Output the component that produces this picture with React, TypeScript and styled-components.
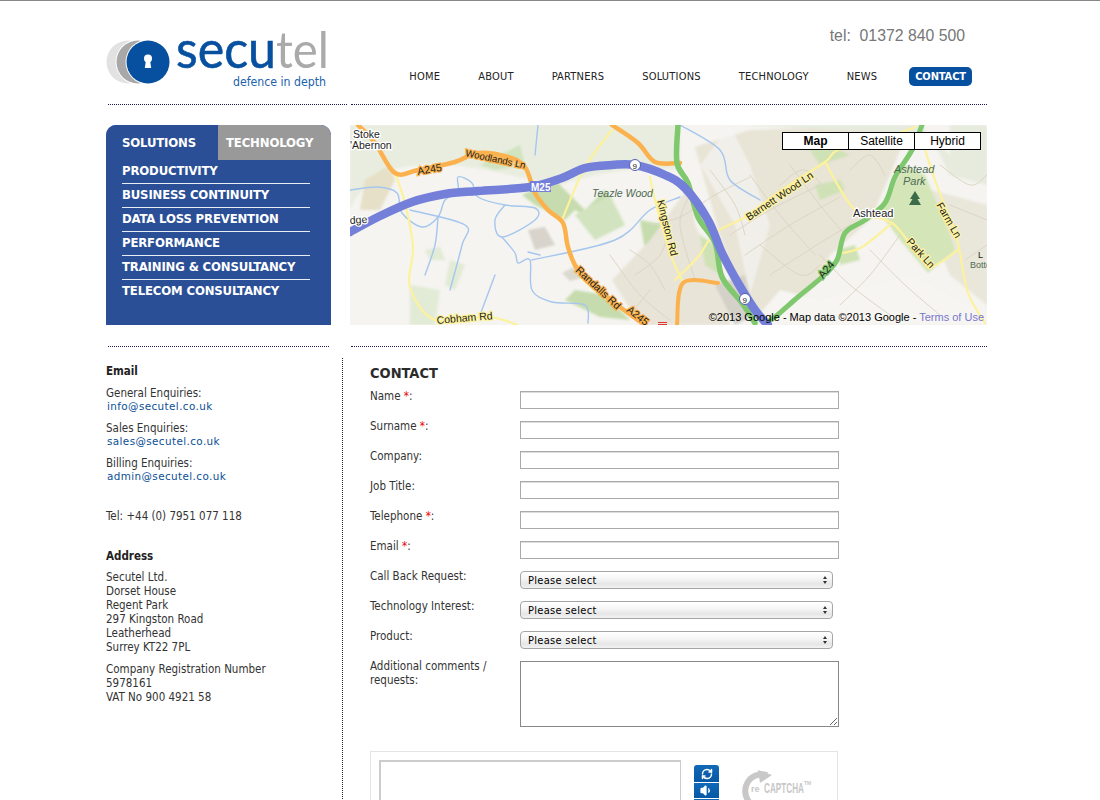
import React from "react";
import styled, { createGlobalStyle } from "styled-components";
import { RefreshCw, Volume1 } from "lucide-react";

const bodyFont = `"DejaVu Sans Condensed", "DejaVu Sans", "Noto Sans", sans-serif`;

const GlobalStyle = createGlobalStyle`
  html, body { margin: 0; padding: 0; background: #fff; }
  body { font-family: ${bodyFont}; font-stretch: condensed; color: #333; }
`;

const Shell = styled.div`
  height: 800px;
  overflow: hidden;
  border-top: 1px solid #888;
  box-sizing: border-box;
  display: flex;
  flex-direction: column;
`;

const Page = styled.div`
  width: 881px;
  margin-left: 106px;
  flex: 1;
  display: flex;
  flex-direction: column;
`;

const Header = styled.header`
  height: 103px;
  display: flex;
  justify-content: space-between;
`;

const LogoWrap = styled.a`
  display: block;
  padding-top: 28px;
`;

const HeaderRight = styled.div`
  display: flex;
  flex-direction: column;
  align-items: flex-end;
  padding-right: 15px;
`;

const Phone = styled.div`
  font: 15.8px/20px "Liberation Sans", Arial, sans-serif;
  color: #777;
  margin: 25px 7px 0 0;
  white-space: pre;
`;

const Nav = styled.nav`
  display: flex;
  align-items: center;
  gap: 38px;
  margin-top: 21px;
`;

const NavItem = styled.a<{ $active?: boolean }>`
  font-size: 11px;
  line-height: 19px;
  letter-spacing: ${(p) => (p.$active ? "-0.1px" : "0.2px")};
  color: ${(p) => (p.$active ? "#fff" : "#222")};
  font-weight: ${(p) => (p.$active ? 700 : 400)};
  background: ${(p) => (p.$active ? "#07509f" : "transparent")};
  border-radius: ${(p) => (p.$active ? "5px" : "0")};
  padding: ${(p) => (p.$active ? "0 6px" : "0")};
  margin-left: ${(p) => (p.$active ? "-6px" : "0")};
`;

const RuleRow = styled.div`
  display: flex;
  padding-left: 2px;
`;

const Rule = styled.div<{ $w: number; $gap?: number }>`
  width: ${(p) => p.$w}px;
  margin-right: ${(p) => p.$gap ?? 0}px;
  border-top: 1px dotted #1a1a55;
`;

const Panels = styled.div`
  display: flex;
  gap: 19px;
  margin: 20px 0 21px;
`;

const SideMenu = styled.div`
  width: 225px;
  height: 200px;
  background: #2a4f96;
  border-radius: 10px 10px 0 0;
  overflow: hidden;
`;

const Tabs = styled.div`
  display: flex;
  height: 35px;
`;

const Tab = styled.div<{ $on?: boolean }>`
  width: ${(p) => (p.$on ? 112 : 113)}px;
  background: ${(p) => (p.$on ? "#2a4f96" : "#999")};
  border-radius: 0 10px 0 0;
  color: #fff;
  font-size: 13px;
  letter-spacing: -0.15px;
  font-weight: 700;
  line-height: 36px;
  padding-left: ${(p) => (p.$on ? 16 : 8)}px;
  box-sizing: border-box;
  white-space: nowrap;
`;

const MenuList = styled.ul`
  list-style: none;
  margin: 0 21px 0 16px;
  padding: 0;
`;

const MenuItem = styled.li`
  height: 24px;
  box-sizing: border-box;
  color: #fff;
  font-size: 13px;
  letter-spacing: -0.15px;
  font-weight: 700;
  line-height: 22px;
  white-space: nowrap;
  border-bottom: 1px solid #e8edf6;
  &:last-child { border-bottom: 0; }
`;

const MapBox = styled.div`
  position: relative;
  width: 637px;
  height: 200px;
  overflow: hidden;
  background: #f3f1ec;
`;

const MapTypes = styled.div`
  position: absolute;
  top: 7px;
  right: 6px;
  display: flex;
  border: 1px solid #000;
  background: #000;
  gap: 1px;
`;

const MapType = styled.div<{ $on?: boolean }>`
  width: 65px;
  height: 16px;
  background: #fff;
  font: ${(p) => (p.$on ? 700 : 400)} 12px/16px "Liberation Sans", Arial, sans-serif;
  color: #000;
  text-align: center;
`;

const Copyright = styled.div`
  position: absolute;
  right: 3px;
  bottom: 1px;
  font: 11px/14px "Liberation Sans", Arial, sans-serif;
  color: #000;
  white-space: nowrap;
  a { color: #7777cc; }
`;

const Main = styled.div`
  flex: 1;
  display: flex;
  margin-top: 11px;
`;

const Sidebar = styled.aside`
  width: 236px;
  border-right: 1px dotted #222;
  padding-top: 6px;
  font-size: 11.5px;
  line-height: 14px;
  flex: none;
`;

const SideTitle = styled.div<{ $mb?: number }>`
  font-weight: 700;
  margin-bottom: ${(p) => p.$mb ?? 8}px;
  color: #222;
`;

const SideBlock = styled.div<{ $mb?: number }>`
  margin-bottom: ${(p) => p.$mb ?? 8}px;
`;

const MailLink = styled.a`
  display: block;
  margin-left: 1px;
  line-height: 13px;
  color: #0a4f96;
  font-family: "DejaVu Sans", sans-serif;
  font-stretch: normal;
  font-size: 10.4px;
  letter-spacing: 0.4px;
`;

const Content = styled.main`
  flex: 1;
  padding-left: 27px;
`;

const Heading = styled.h1`
  margin: 0;
  height: 31px;
  font-size: 14.500px;
  line-height: 31px;
  font-weight: 700;
  color: #2b2b2b;
`;

const Row = styled.div`
  display: flex;
  min-height: 30px;
`;

const FieldLabel = styled.label`
  width: 150px;
  flex: none;
  font-size: 11.5px;
  line-height: 14px;
  color: #333;
  b { color: #e00; font-weight: 400; }
`;

const TextInput = styled.input`
  width: 319px;
  height: 18px;
  margin: 2px 0 0;
  box-sizing: border-box;
  padding: 0 2px;
  border: 1px solid #aaa;
  box-shadow: inset 0 1px 0 #ddd;
  background: #fff;
  outline: 0;
`;

const SelectWrap = styled.div`
  position: relative;
  margin-top: 2px;
  width: 313px;
  height: 18px;
`;

const Select = styled.select`
  display: block;
  appearance: none;
  width: 100%;
  height: 100%;
  box-sizing: border-box;
  border: 1px solid #a5a5a5;
  border-radius: 4px;
  padding: 0 0 0 7px;
  font-family: ${bodyFont};
  font-size: 11px;
  letter-spacing: 0.3px;
  color: #000;
  background: linear-gradient(#fff 0%, #f6f6f6 40%, #e6e6e6 75%, #f2f2f2 100%);
  outline: 0;
`;

const SelectArrows = styled.svg`
  position: absolute;
  right: 5px;
  top: 4px;
  pointer-events: none;
`;

const Comments = styled.textarea`
  width: 319px;
  height: 66px;
  margin: 2px 0 0;
  box-sizing: border-box;
  border: 1px solid #888;
  padding: 2px;
  outline: 0;
`;

const CaptchaBox = styled.div`
  display: flex;
  width: 468px;
  height: 130px;
  margin-top: 24px;
  padding: 8px;
  box-sizing: border-box;
  border: 1px solid #e4e4e4;
`;

const CaptchaImage = styled.div`
  width: 302px;
  height: 60px;
  box-sizing: border-box;
  border: 2px solid #ccc;
  border-right-width: 1px;
  flex: none;
`;

const CaptchaButtons = styled.div`
  display: flex;
  flex-direction: column;
  gap: 1px;
  width: 25px;
  margin: 5px 0 0 13px;
  flex: none;
`;

const CaptchaButton = styled.div<{ $first?: boolean }>`
  height: ${(p) => (p.$first ? 17 : 15)}px;
  display: flex;
  align-items: center;
  justify-content: center;
  color: #fff;
  background: linear-gradient(#1069b8, #0558a5);
  border-radius: ${(p) => (p.$first ? "3px 3px 0 0" : "0")};
`;

const CaptchaLogo = styled.svg`
  margin: 10px 0 0 21px;
  flex: none;
`;

const Road = styled.path<{ $c: string; $w: number }>`
  fill: none;
  stroke: ${(p) => p.$c};
  stroke-width: ${(p) => p.$w};
  stroke-linecap: round;
  stroke-linejoin: round;
`;

const SoftGround = styled.g`
  filter: blur(1.2px);
`;

const MapLabel = styled.text<{ $halo?: string }>`
  font: 10.5px "Liberation Sans", Arial, sans-serif;
  fill: #222;
  stroke: ${(p) => p.$halo ?? "transparent"};
  stroke-width: 2.5px;
  paint-order: stroke;
`;

const WoodLabel = styled(MapLabel)`
  font-style: italic;
  fill: #4d6b55;
`;

// catmull-rom through the points, roads looked too angular as straight lines
const smooth = (pts: string) => {
  const p = pts.split(" ").map((s) => s.split(",").map(Number));
  let d = `M${p[0][0]} ${p[0][1]}`;
  for (let i = 0; i < p.length - 1; i++) {
    const a = p[i - 1] ?? p[i];
    const b = p[i];
    const c = p[i + 1];
    const e = p[i + 2] ?? c;
    d += `C${b[0] + (c[0] - a[0]) / 6} ${b[1] + (c[1] - a[1]) / 6} ${c[0] - (e[0] - b[0]) / 6} ${c[1] - (e[1] - b[1]) / 6} ${c[0]} ${c[1]}`;
  }
  return d;
};

const Logo = () => (
  <svg width="224" height="60" viewBox="0 0 224 60">
    <circle cx="22" cy="33" r="21.5" fill="#e2e2e2" />
    <circle cx="32" cy="33" r="22.5" fill="#fff" />
    <circle cx="32" cy="33" r="21.5" fill="#a8a8a8" />
    <circle cx="42" cy="33" r="22.5" fill="#fff" />
    <circle cx="42" cy="33" r="21.5" fill="#07509f" />
    <circle cx="42" cy="29.5" r="4" fill="#fff" />
    <path d="M40 31h4l1.2 8h-6.4z" fill="#fff" />
    <text x="70" y="39" fontFamily="Lato, sans-serif" fontSize="53" fill="#07509f" textLength="100" lengthAdjust="spacingAndGlyphs" stroke="#07509f" strokeWidth="0.6">secu</text>
    <text x="170" y="39" fontFamily="Lato, sans-serif" fontSize="51" fill="#aaa" textLength="53" lengthAdjust="spacingAndGlyphs">tel</text>
    <text x="127" y="57" fontFamily="DejaVu Sans Condensed, sans-serif" fontSize="12" fill="#1c62ab" textLength="93" lengthAdjust="spacingAndGlyphs">defence in depth</text>
  </svg>
);

const minorStreets = [
  "300,100 330,92 365,70 400,52",
  "380,110 420,85 470,60",
  "395,130 440,100 490,72",
  "420,150 470,118 500,100",
  "400,50 430,90 465,130",
  "440,40 470,80 495,110",
  "470,130 500,160 540,190",
  "520,125 555,160 590,190",
  "550,110 520,150 490,180",
  "285,150 310,130 320,100",
  "260,130 290,170 320,195",
  "300,165 280,190",
  "590,40 620,60 637,50",
  "600,80 637,95",
  "615,135 637,120",
  "410,120 450,150 470,140",
  "430,60 455,45 480,70",
  "360,45 385,80 395,110",
  "500,45 520,30 535,50",
  "280,125 300,140 315,165",
  "345,155 330,100 340,70",
];

const rivers = [
  "0,65 28,62 47,68 52,88 72,102 88,92 95,75 108,67 108,52 122,58 128,72 155,80 185,83 185,95 152,112 145,95 155,80",
  "152,112 165,128 168,138 180,135 182,165 202,177 235,180 238,198",
  "182,135 265,115 300,85 330,72",
  "60,85 115,100 112,120 100,165",
  "88,92 85,120 75,150",
  "145,150 130,190",
  "178,127 190,130",
  "188,0 185,30",
  "330,0 370,25 380,55 410,75",
  "0,110 8,100",
];

const MapImage = () => (
  <svg width="637" height="200" viewBox="0 0 637 200">
    <rect width="637" height="200" fill="#f5f4f0" />
    <SoftGround>
      <path d="M0 0H330V45C280 40 240 50 210 60 150 50 100 30 40 45 20 55 5 70 0 85Z" fill="#e8eddf" />
      <path d="M15 55 40 40 45 55 30 85 10 85Z" fill="#e6e0c8" />
      <path d="M172 70 205 55 235 85 255 65 270 90 250 100 225 85 215 95 185 80Z" fill="#c6dcae" />
      <path d="M130 40 170 20 175 40 145 45Z" fill="#d2e3bf" />
      <path d="M225 90 260 70 275 100 245 115Z" fill="#d2e3bf" />
      <path d="M290 95 315 100 318 125 295 125Z" fill="#c6dcae" />
      <path d="M225 165 255 170 280 195 250 192 215 175Z" fill="#c6dcae" />
      <path d="M60 160 90 165 85 200 60 200Z" fill="#e2ebd6" />
      <path d="M100 135 115 140 105 165 95 160Z" fill="#e2ebd6" />
      <path d="M75 125 90 122 95 135 80 135Z" fill="#e2ebd6" />
      <path d="M178 105 195 102 205 120 185 125Z" fill="#d8d4cc" />
      <path d="M212 148 228 140 235 152 220 156Z" fill="#dcd9ce" />
      <path d="M262 155 300 115 340 60 345 100 375 160 380 200 290 200Z" fill="#e8e4d8" />
      <path d="M345 22 400 5 560 0 540 50 520 95 480 130 465 160 425 200 395 180 370 110Z" fill="#e8e4d6" />
      <path d="M562 60 637 80 637 180 600 150Z" fill="#e9e6da" />
      <path d="M395 0H570L600 30V0H637V60L600 50 580 10Z" fill="#e6ebde" />
      <path d="M528 85 555 40 575 50 600 110 605 125 578 148 550 115Z" fill="#d4e5b8" />
      <path d="M445 10 478 20 500 30 470 40 460 25Z" fill="#cfe2b6" />
      <path d="M487 125 505 120 510 135 490 140Z" fill="#cfe2b6" />
      <path d="M465 60 490 55 495 65 470 75Z" fill="#cfe2b6" />
      <path d="M350 110 365 120 370 150 355 140Z" fill="#cfe2b6" />
      <path d="M400 200 430 165 470 175 560 150 637 190V200Z" fill="#f6f5f2" />
      <path d="M380 0 400 40 420 100 400 170 385 100 350 40Z" fill="#f6f5f2" opacity="0.65" />
      <path d="M365 160 395 150 405 190 385 200Z" fill="#d4d1c9" />
    </SoftGround>
    {minorStreets.map((s) => (
      <Road key={s} d={smooth(s)} $c="#dcd6c6" $w={1} />
    ))}
    {rivers.map((s) => (
      <Road key={s} d={smooth(s)} $c="#a5c6ee" $w={1.4} />
    ))}
    <Road d={smooth("325,155 348,132 365,108 395,92 432,65 475,37 488,25 530,15 565,2")} $c="#fdf29c" $w={2.2} />
    <Road d={smooth("475,37 505,85 542,98 572,135 582,142 608,125")} $c="#fdf29c" $w={2.2} />
    <Road d={smooth("572,15 585,55 605,108 610,128 618,168 635,198")} $c="#fdf29c" $w={2.2} />
    <Road d={smooth("542,98 512,122 492,128")} $c="#fdf29c" $w={2.2} />
    <Road d={smooth("45,48 55,78 63,122 60,162 85,195 138,192 168,200")} $c="#fdf29c" $w={2.2} />
    <Road d={smooth("262,5 235,42 212,95")} $c="#fdf29c" $w={2.2} />
    <Road d={smooth("300,52 305,75 320,128 333,157")} $c="#fdf29c" $w={2.2} />
    <Road d={smooth("8,0 25,18 45,48 68,45 105,37 128,28 158,32 175,42 185,68 198,85 213,98 218,122 228,145 252,168 278,188 295,200")} $c="#fbb24e" $w={4.5} />
    <Road d={smooth("262,0 288,18 305,37 330,38")} $c="#fbb24e" $w={4.5} />
    <Road d={smooth("327,200 333,158 368,158")} $c="#fbb24e" $w={4} />
    <Road d={smooth("572,0 562,25 545,52 535,78 515,95 495,108 487,135 472,152 448,172 425,192 415,198")} $c="#7fc86d" $w={5} />
    <Road d={smooth("328,0 327,38 338,58 348,92 365,118 372,152 392,178 405,198")} $c="#7fc86d" $w={5.5} />
    <Road d={smooth("0,107 28,92 62,77 95,69 128,66 180,62 212,53 235,43 262,40 285,40 315,50 335,63 358,95 372,128 388,158 405,185 418,200")} $c="#737fd8" $w={8.5} />
    <rect x="180" y="56" width="21" height="11" fill="#737fd8" />
    <MapLabel x="181" y="65.500" style={{ fill: "#fff", fontWeight: 700, fontSize: 10 }}>M25</MapLabel>
    <circle cx="285" cy="40" r="5.500" fill="#fff" stroke="#5560b0" strokeWidth="1" />
    <MapLabel x="282.500" y="43.500" style={{ fontSize: 8 }}>9</MapLabel>
    <circle cx="395" cy="174" r="5.500" fill="#fff" stroke="#5560b0" strokeWidth="1" />
    <MapLabel x="392.500" y="177.500" style={{ fontSize: 8 }}>9</MapLabel>
    <MapLabel x="3" y="13" $halo="#fff">Stoke</MapLabel>
    <MapLabel x="0" y="24" $halo="#fff">'Abernon</MapLabel>
    <MapLabel x="0" y="99" transform="rotate(-4 0 99)" $halo="#fff">dge</MapLabel>
    <MapLabel x="68" y="50" transform="rotate(-10 68 50)" $halo="#fbb24e">A245</MapLabel>
    <MapLabel x="115" y="31" transform="rotate(12 115 31)" style={{ fontSize: 9.6 }} $halo="#fbb24e">Woodlands Ln</MapLabel>
    <WoodLabel x="242" y="72">Teazle Wood</WoodLabel>
    <MapLabel x="307" y="76" transform="rotate(76 307 76)" $halo="#fdf29c">Kingston Rd</MapLabel>
    <MapLabel x="225" y="146" transform="rotate(43 225 146)" $halo="#fbb24e">Randalls Rd</MapLabel>
    <MapLabel x="276" y="186" transform="rotate(38 276 186)" $halo="#fbb24e">A245</MapLabel>
    <MapLabel x="87" y="199" transform="rotate(-5 87 199)" $halo="#fdf29c">Cobham Rd</MapLabel>
    <MapLabel x="399" y="96" transform="rotate(-34 399 96)" $halo="#fdf29c">Barnett Wood Ln</MapLabel>
    <WoodLabel x="544" y="48" style={{ fontSize: 11 }}>Ashtead</WoodLabel>
    <WoodLabel x="553" y="60" style={{ fontSize: 11 }}>Park</WoodLabel>
    <path d="M565 66 570 74H567.500L571 80H559L562.500 74H560Z" fill="#3c6b4a" />
    <MapLabel x="503" y="92" style={{ fontSize: 11 }} $halo="#fff">Ashtead</MapLabel>
    <MapLabel x="586" y="80" transform="rotate(60 586 80)" $halo="#fdf29c">Farm Ln</MapLabel>
    <MapLabel x="556" y="117" transform="rotate(48 556 117)" $halo="#fdf29c">Park Ln</MapLabel>
    <MapLabel x="473" y="154" transform="rotate(-50 473 154)" $halo="#7fc86d">A24</MapLabel>
    <MapLabel x="628" y="133" style={{ fontSize: 9 }}>L</MapLabel>
    <WoodLabel x="620" y="143" style={{ fontSize: 9, fontStyle: "normal" }}>Botto</WoodLabel>
    <rect x="308" y="197" width="9" height="1" fill="#d33" />
    <rect x="308" y="199" width="9" height="1" fill="#d33" />
  </svg>
);

const SelectField = () => (
  <SelectWrap>
    <Select defaultValue="">
      <option value="">Please select</option>
    </Select>
    <SelectArrows width="6" height="10" viewBox="0 0 6 10">
      <path d="M3 1 5 4H1ZM3 9 1 6H5Z" fill="#333" />
    </SelectArrows>
  </SelectWrap>
);

const inputs: [string, boolean][] = [
  ["Name", true],
  ["Surname", true],
  ["Company", false],
  ["Job Title", false],
  ["Telephone", true],
  ["Email", true],
];

const menu = [
  "PRODUCTIVITY",
  "BUSINESS CONTINUITY",
  "DATA LOSS PREVENTION",
  "PERFORMANCE",
  "TRAINING & CONSULTANCY",
  "TELECOM CONSULTANCY",
];

const App = () => {
  return (
    <Shell>
      <GlobalStyle />
      <Page>
        <Header>
          <LogoWrap>
            <Logo />
          </LogoWrap>
          <HeaderRight>
            <Phone>tel:  01372 840 500</Phone>
            <Nav>
              <NavItem>HOME</NavItem>
              <NavItem>ABOUT</NavItem>
              <NavItem>PARTNERS</NavItem>
              <NavItem>SOLUTIONS</NavItem>
              <NavItem>TECHNOLOGY</NavItem>
              <NavItem>NEWS</NavItem>
              <NavItem $active>CONTACT</NavItem>
            </Nav>
          </HeaderRight>
        </Header>
        <RuleRow>
          <Rule $w={239} $gap={4} />
          <Rule $w={636} />
        </RuleRow>
        <Panels>
          <SideMenu>
            <Tabs>
              <Tab $on>SOLUTIONS</Tab>
              <Tab>TECHNOLOGY</Tab>
            </Tabs>
            <MenuList>
              {menu.map((m) => (
                <MenuItem key={m}>{m}</MenuItem>
              ))}
            </MenuList>
          </SideMenu>
          <MapBox>
            <MapImage />
            <MapTypes>
              <MapType $on>Map</MapType>
              <MapType>Satellite</MapType>
              <MapType>Hybrid</MapType>
            </MapTypes>
            <Copyright>
              ©2013 Google - Map data ©2013 Google - <a>Terms of Use</a>
            </Copyright>
          </MapBox>
        </Panels>
        <RuleRow>
          <Rule $w={221} $gap={22} />
          <Rule $w={636} />
        </RuleRow>
        <Main>
          <Sidebar>
            <SideTitle>Email</SideTitle>
            <SideBlock>
              General Enquiries:
              <MailLink>info@secutel.co.uk</MailLink>
            </SideBlock>
            <SideBlock>
              Sales Enquiries:
              <MailLink>sales@secutel.co.uk</MailLink>
            </SideBlock>
            <SideBlock $mb={26}>
              Billing Enquiries:
              <MailLink>admin@secutel.co.uk</MailLink>
            </SideBlock>
            <SideBlock $mb={26}>Tel: +44 (0) 7951 077 118</SideBlock>
            <SideTitle $mb={7}>Address</SideTitle>
            <SideBlock>
              Secutel Ltd.
              <br />
              Dorset House
              <br />
              Regent Park
              <br />
              297 Kingston Road
              <br />
              Leatherhead
              <br />
              Surrey KT22 7PL
            </SideBlock>
            <SideBlock>
              Company Registration Number
              <br />
              5978161
              <br />
              VAT No 900 4921 58
            </SideBlock>
          </Sidebar>
          <Content>
            <Heading>CONTACT</Heading>
            {inputs.map(([name, required]) => (
              <Row key={name}>
                <FieldLabel>
                  {name}
                  {required && <b> *</b>}:
                </FieldLabel>
                <TextInput />
              </Row>
            ))}
            <Row>
              <FieldLabel>Call Back Request:</FieldLabel>
              <SelectField />
            </Row>
            <Row>
              <FieldLabel>Technology Interest:</FieldLabel>
              <SelectField />
            </Row>
            <Row>
              <FieldLabel>Product:</FieldLabel>
              <SelectField />
            </Row>
            <Row>
              <FieldLabel>
                Additional comments /
                <br />
                requests:
              </FieldLabel>
              <Comments />
            </Row>
            <CaptchaBox>
              <CaptchaImage />
              <CaptchaButtons>
                <CaptchaButton $first>
                  <RefreshCw size={12} strokeWidth={3} />
                </CaptchaButton>
                <CaptchaButton>
                  <Volume1 size={13} strokeWidth={2.5} fill="#fff" />
                </CaptchaButton>
                <CaptchaButton />
              </CaptchaButtons>
              <CaptchaLogo width="76" height="40" viewBox="0 0 76 40">
                <path d="M27 5A16 16 0 1 0 17 37" fill="none" stroke="#c8c8c8" strokeWidth="6" />
                <path d="M18 0 32 5 20 13Z" fill="#c8c8c8" />
                <text x="11" y="22" fontFamily="Liberation Sans, sans-serif" fontWeight="700" fontSize="9" fill="#c8c8c8">re</text>
                <text x="24" y="23" fontFamily="Liberation Sans, sans-serif" fontWeight="700" fontSize="14" fill="#c8c8c8" textLength="40" lengthAdjust="spacingAndGlyphs">CAPTCHA</text>
                <text x="64" y="15" fontFamily="Liberation Sans, sans-serif" fontWeight="700" fontSize="5" fill="#c8c8c8">TM</text>
              </CaptchaLogo>
            </CaptchaBox>
          </Content>
        </Main>
      </Page>
    </Shell>
  );
};

export default App;
